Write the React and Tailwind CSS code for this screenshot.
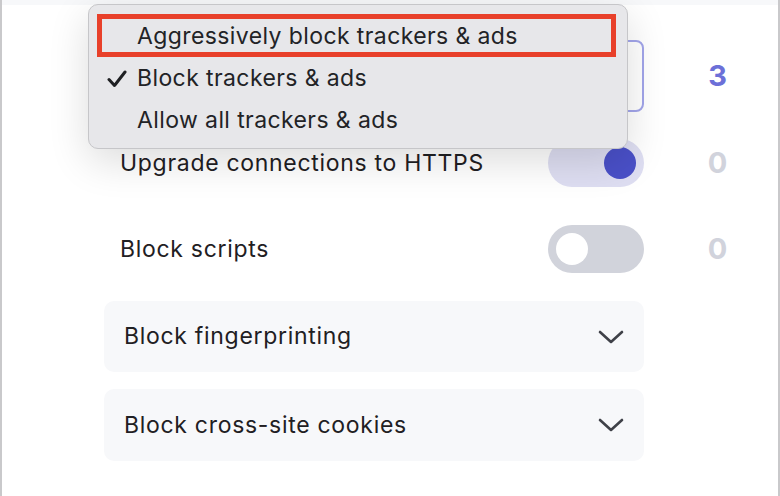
import React from 'react';

const pageFont = { fontFamily: 'Inter, "Noto Sans", sans-serif' };

const Toggle = ({ on }) => (
    <div className={`w-[96px] h-[48px] rounded-full flex items-center px-[8px] ${on ? 'bg-[#dedef2] justify-end' : 'bg-[#d1d3db] justify-start'}`}>
        <div className={`w-[32px] h-[32px] rounded-full ${on ? 'bg-[#4a50c8]' : 'bg-white'}`} />
    </div>
);

const Chevron = () => (
    <svg width="26" height="16" viewBox="0 0 26 16" fill="none">
        <polyline points="2,3 13,13 24,3" stroke="#3f4148" strokeWidth="2.6" strokeLinecap="round" strokeLinejoin="round" />
    </svg>
);

const Row = ({ children, count, countClass, className }) => (
    <div className={`flex items-center ${className || ''}`}>
        <div className="w-[540px]">{children}</div>
        <div className={`w-[64px] ml-[42px] text-center text-[29px] font-bold ${countClass}`}>{count}</div>
    </div>
);

export default function App() {
    return (
        <div className="relative w-[780px] h-[496px] bg-white overflow-hidden border-x-2 border-[#c9c9cb] text-[#1f2023]" style={pageFont}>
            <div className="h-[5px] bg-[#f7f8fa]" />

            {/* frame ticks */}
            <div className="absolute left-[-2px] top-[65px] w-[2px] h-[3px] bg-[#9a9a9a]" />
            <div className="absolute left-[-2px] top-[251px] w-[2px] h-[3px] bg-[#9a9a9a]" />
            <div className="absolute left-[-2px] top-[437px] w-[2px] h-[3px] bg-[#9a9a9a]" />
            <div className="absolute right-[-2px] top-[65px] w-[2px] h-[3px] bg-[#9a9a9a]" />
            <div className="absolute right-[-2px] top-[437px] w-[2px] h-[3px] bg-[#9a9a9a]" />

            <div className="ml-[102px] mt-[35px] flex flex-col text-[23px] tracking-[0.7px]">
                {/* select, its label sits under the open menu */}
                <Row count="3" countClass="text-[#6c70d8]">
                    <div className="h-[72px] rounded-lg border-2 border-[#a2a5ea]" />
                </Row>

                <Row count="0" countClass="text-[#d1d3dc]" className="mt-[27px]">
                    <div className="flex items-center justify-between pl-4">
                        <span>Upgrade connections to HTTPS</span>
                        <Toggle on />
                    </div>
                </Row>

                <Row count="0" countClass="text-[#d1d3dc]" className="mt-[38px]">
                    <div className="flex items-center justify-between pl-4">
                        <span>Block scripts</span>
                        <Toggle />
                    </div>
                </Row>

                <div className="mt-[28px] w-[540px] flex flex-col gap-[17px]">
                    <div className="h-[71px] rounded-[10px] bg-[#f7f8fa] flex items-center justify-between pl-5 pr-[20px]">
                        <span>Block fingerprinting</span>
                        <Chevron />
                    </div>
                    <div className="h-[72px] rounded-[10px] bg-[#f7f8fa] flex items-center justify-between pl-5 pr-[20px]">
                        <span>Block cross-site cookies</span>
                        <Chevron />
                    </div>
                </div>
            </div>

            {/* open dropdown menu */}
            <div className="absolute left-[86px] top-[4px] w-[540px] rounded-[10px] border border-[#c6c6c9] bg-[#e7e7ea] pt-[10px] pb-[7px] shadow-[0_12px_40px_rgba(0,0,0,0.14)] text-[23px] tracking-[0.4px] text-[#222326]" style={{ fontFamily: 'Inter, "Liberation Sans", sans-serif' }}>
                <div className="absolute left-[8px] top-[9px] w-[519px] h-[43px] border-[5px] border-[#e8402a]" />
                <div className="h-[42px] flex items-center pl-[48px]">Aggressively block trackers &amp; ads</div>
                <div className="relative h-[42px] flex items-center pl-[48px]">
                    <svg className="absolute left-[18px] top-[13px]" width="20" height="18" viewBox="0 0 20 18" fill="none">
                        <polyline points="2,9.5 7.5,15.5 18,2" stroke="#1f2023" strokeWidth="3" strokeLinecap="round" strokeLinejoin="round" />
                    </svg>
                    Block trackers &amp; ads
                </div>
                <div className="h-[42px] flex items-center pl-[48px]">Allow all trackers &amp; ads</div>
            </div>
        </div>
    );
}
